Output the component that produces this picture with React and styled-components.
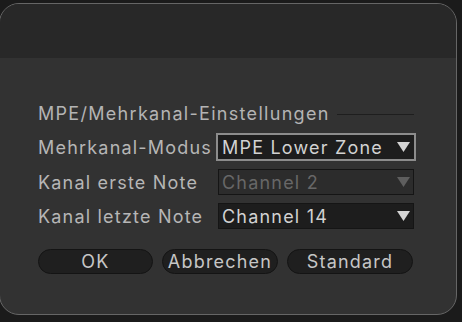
import React from 'react';
import styled, { createGlobalStyle } from 'styled-components';

const GlobalStyle = createGlobalStyle`
    html, body {
        margin: 0;
        padding: 0;
        background: #1b1b1b;
        overflow: hidden;
    }
    body {
        font-family: Inter, "DejaVu Sans", sans-serif;
        width: 462px;
        height: 322px;
    }
`;

const Screen = styled.div`
    width: 462px;
    height: 322px;
    padding-top: 3px;
    box-sizing: border-box;
`;

const Dialog = styled.div`
    margin-left: -1px;
    width: 458px;
    height: 312px;
    box-sizing: border-box;
    border: 1px solid #666;
    border-radius: 20px;
    overflow: hidden;
    background: #323232;
    display: flex;
    flex-direction: column;
`;

const TitleBar = styled.div`
    height: 54px;
    background: #282828;
    flex-shrink: 0;
`;

const Body = styled.div`
    padding: 45px 42px 0 38px;
    display: flex;
    flex-direction: column;
`;

const SectionHeader = styled.div`
    display: flex;
    align-items: center;
    gap: 7px;
    font-size: 18px;
    line-height: 22px;
    letter-spacing: 1.3px;
    color: #b4b4b4;

    &::after {
        content: '';
        flex: 1;
        height: 1px;
        background: #1e1e1e;
        margin-top: 1px;
    }
`;

const Form = styled.div`
    display: grid;
    grid-template-columns: 178px 200px;
    row-gap: 8px;
    margin-top: 8px;
    align-items: center;
`;

const Label = styled.div`
    font-size: 18px;
    letter-spacing: 1.2px;
    color: #b6b6b6;
    white-space: nowrap;
`;

const Select = styled.div`
    height: ${p => (p.$focused ? 28 : 26)}px;
    margin: 0 ${p => (p.$focused ? 0 : 2)}px;
    box-sizing: border-box;
    border: ${p => (p.$focused ? '2px solid #8c8c8c' : '1px solid #151515')};
    background: ${p => (p.$disabled ? '#2c2c2c' : '#1d1d1d')};
    color: ${p => (p.$disabled ? '#676767' : '#d2d2d2')};
    display: flex;
    align-items: center;
    justify-content: space-between;
    padding: 0 ${p => (p.$focused ? 4 : 3)}px 0 ${p => (p.$focused ? 4 : 3)}px;
    font-size: 18px;
    letter-spacing: 1.2px;
    overflow: hidden;
    white-space: nowrap;
`;

const Arrow = styled.svg`
    width: 13px;
    height: 10px;
    flex-shrink: 0;
    fill: ${p => (p.$disabled ? '#5e5e5e' : '#d4d4d4')};
`;

const ButtonRow = styled.div`
    display: flex;
    gap: 9px;
    margin-top: 20px;
`;

const Button = styled.div`
    width: ${p => p.$w}px;
    height: 25px;
    box-sizing: border-box;
    border-radius: 13px;
    border: 1px solid #141414;
    background: #1f1f1f;
    color: #c6c6c6;
    font-size: 18px;
    letter-spacing: 1.2px;
    display: flex;
    align-items: center;
    justify-content: center;
    white-space: nowrap;
`;

function DropArrow({ disabled }) {
    return (
        <Arrow $disabled={disabled} viewBox="0 0 13 10">
            <polygon points="0,0 13,0 6.5,10" />
        </Arrow>
    );
}

const rows = [
    { label: 'Mehrkanal-Modus', value: 'MPE Lower Zone', focused: true },
    { label: 'Kanal erste Note', value: 'Channel 2', disabled: true },
    { label: 'Kanal letzte Note', value: 'Channel 14' },
];

export default function App() {
    return (
        <Screen>
            <GlobalStyle />
            <Dialog>
                <TitleBar />
                <Body>
                    <SectionHeader>MPE/Mehrkanal-Einstellungen</SectionHeader>
                    <Form>
                        {rows.map(row => (
                            <React.Fragment key={row.label}>
                                <Label>{row.label}</Label>
                                <Select $focused={row.focused} $disabled={row.disabled}>
                                    <span>{row.value}</span>
                                    <DropArrow disabled={row.disabled} />
                                </Select>
                            </React.Fragment>
                        ))}
                    </Form>
                    <ButtonRow>
                        <Button $w={115}>OK</Button>
                        <Button $w={116}>Abbrechen</Button>
                        <Button $w={126}>Standard</Button>
                    </ButtonRow>
                </Body>
            </Dialog>
        </Screen>
    );
}
